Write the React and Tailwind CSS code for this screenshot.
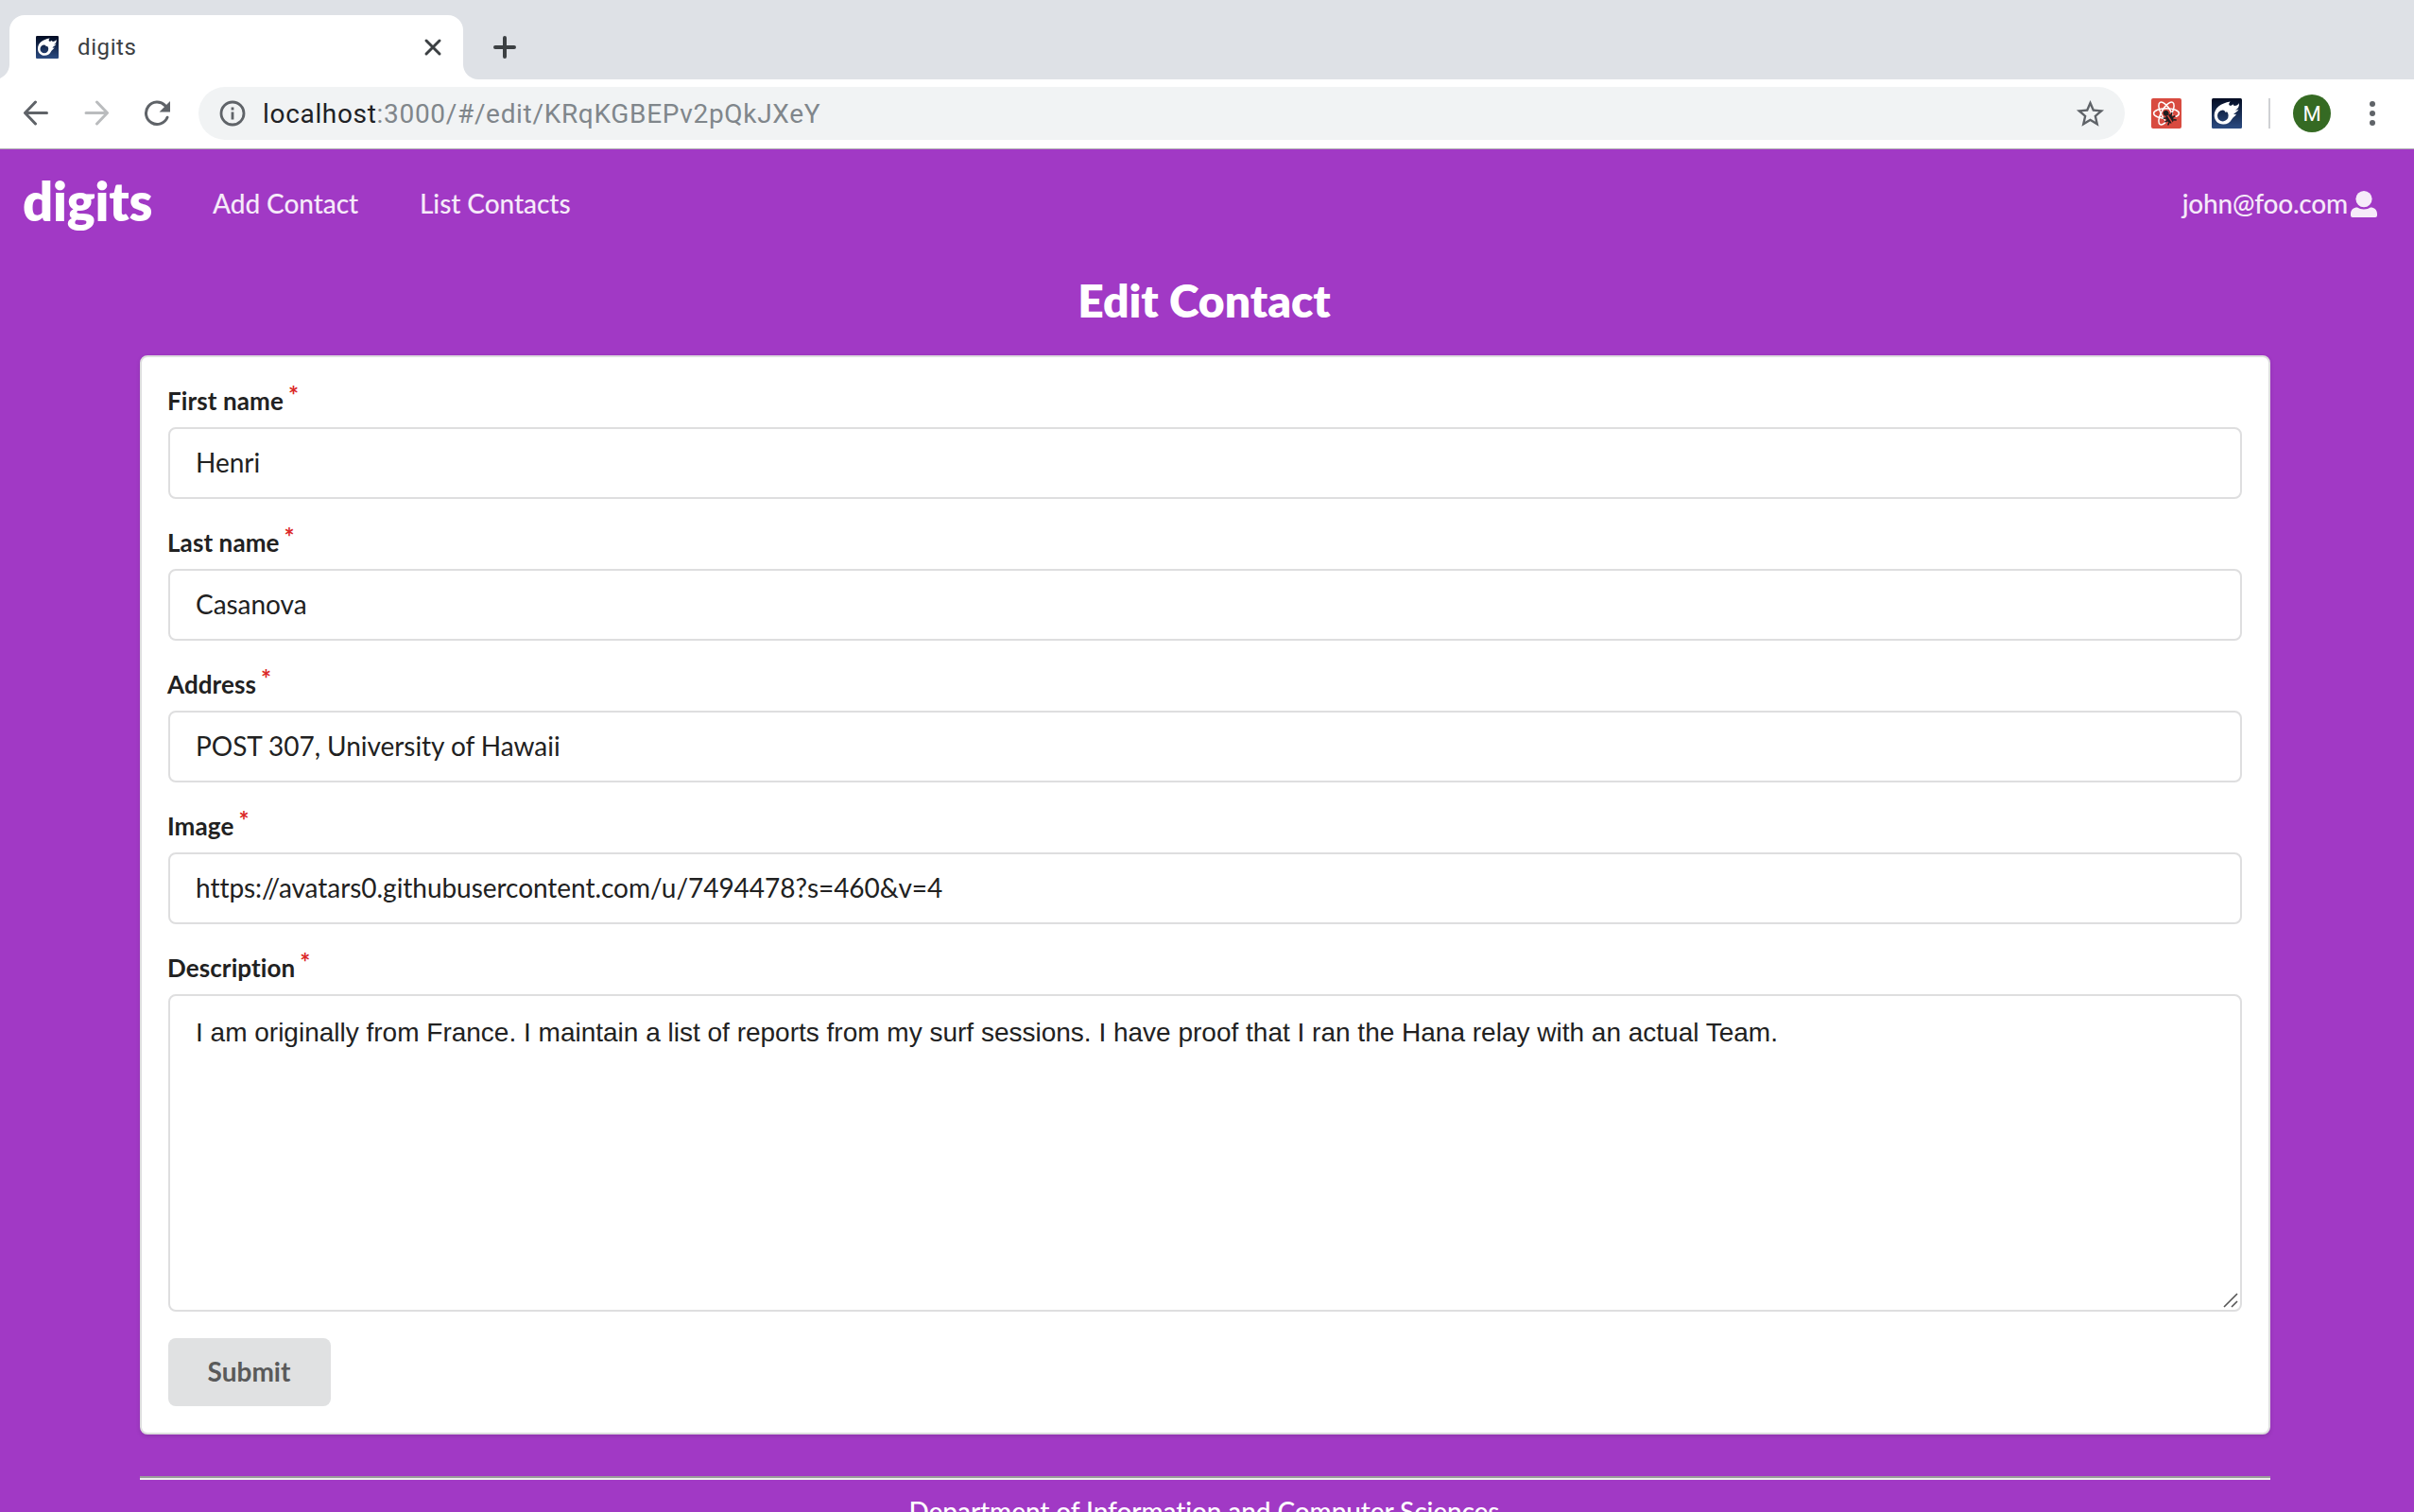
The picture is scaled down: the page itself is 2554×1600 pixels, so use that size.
import React from "react";

function FlameIcon({ className, id }) {
  return (
    <svg className={className} viewBox="0 0 32 32">
      <defs>
        <linearGradient id={id} x1="0" y1="0" x2="0" y2="1">
          <stop offset="0" stopColor="#020b22" />
          <stop offset="1" stopColor="#2c4c82" />
        </linearGradient>
      </defs>
      <rect width="32" height="32" rx="1.5" fill={`url(#${id})`} />
      <path
        fill="#fff"
        fillRule="evenodd"
        d="M2.7 18.5C2.6 10 9.5 5.2 19.6 3.4C18.2 5 17.8 6.2 18.6 7.2C19.8 8.2 21.4 7.6 22.6 6.2C22.6 7.6 24 8.2 25.4 7.8C27 7.4 28.4 6.4 28.8 5C29.4 8.4 28 11.2 25 12.4C26.6 12.6 27.6 12.2 28.6 11.4C27.6 14 24.6 15 23.2 16.8C24.2 17.2 25.2 17 26.2 16.4C25 19 22.4 20 21.2 22.2C19.4 25.6 16 27.8 12 27.6C6.6 27.4 2.9 23.6 2.7 18.5ZM11.8 12.6A5.8 5.9 0 1 0 17.6 18.4C17.6 16.8 17 15.2 16 14.2L14.6 15C14.2 13.8 13 12.6 11.8 12.6Z"
      />
    </svg>
  );
}

function ReactBugIcon() {
  return (
    <svg className="size-8 shrink-0" viewBox="0 0 32 32">
      <rect width="32" height="32" rx="2" fill="#d84b40" />
      <g fill="none" stroke="#fff" strokeWidth="1.5">
        <ellipse cx="16" cy="16" rx="13.4" ry="5.2" />
        <ellipse cx="16" cy="16" rx="13.4" ry="5.2" transform="rotate(60 16 16)" />
        <ellipse cx="16" cy="16" rx="13.4" ry="5.2" transform="rotate(120 16 16)" />
      </g>
      <path d="M14 20L19 15L27 20.5L24 30L17 29.5Z" fill="#d84b40" />
      <g transform="rotate(-32 16 16)" fill="#1d1d1f">
        <circle cx="15.8" cy="15.6" r="2.9" />
        <path d="M12.6 19.6Q13.6 18 15.4 18.6V27.6Q12.8 27 12.6 24Z" />
        <path d="M19.6 19.6Q18.6 18 16.8 18.6V27.6Q19.4 27 19.6 24Z" />
        <path d="M10.6 18.4L13 20.2M9.8 23H13M10.8 27.6L13.4 25.6M21.6 18.4L19.2 20.2M22.4 23H19.2M21.4 27.6L18.8 25.6" stroke="#1d1d1f" strokeWidth="1.5" />
      </g>
    </svg>
  );
}

function TabStrip() {
  return (
    <div className="flex h-[84px] items-end bg-[#dee1e6]">
      <div className="h-4 w-[10px] overflow-hidden bg-white">
        <div className="-ml-1.5 size-4 rounded-br-[16px] bg-[#dee1e6]" />
      </div>
      <div className="flex h-[68px] w-[480px] items-center rounded-t-2xl bg-white pl-7 pr-[22px]">
        <FlameIcon className="size-6" id="tab-sky" />
        <span className="ml-5 grow font-[Roboto] text-[24px] tracking-[0.6px] text-[#3c4043]">digits</span>
        <svg className="size-5" viewBox="0 0 20 20" fill="none" stroke="#3c4043" strokeWidth="3" strokeLinecap="round">
          <path d="M3 3L17 17M17 3L3 17" />
        </svg>
      </div>
      <div className="size-4 bg-white">
        <div className="size-4 rounded-bl-[16px] bg-[#dee1e6]" />
      </div>
      <svg className="mb-[22px] ml-4 size-6" viewBox="0 0 24 24" stroke="#3c4043" strokeWidth="4" strokeLinecap="round">
        <path d="M12 2V22M2 12H22" />
      </svg>
    </div>
  );
}

function Toolbar() {
  return (
    <div className="flex h-[74px] items-start border-b border-[#b0aeb4] bg-white pt-2">
      <div className="flex h-14 w-[210px] items-center pl-6">
        <svg className="size-7" viewBox="0 0 28 28" fill="none" stroke="#5f6368" strokeWidth="3" strokeLinecap="round" strokeLinejoin="round">
          <path d="M25.5 13.5H3M13.5 2L2.5 13.5L13.5 25" />
        </svg>
        <svg className="ml-9 size-7" viewBox="0 0 28 28" fill="none" stroke="#babcbe" strokeWidth="3" strokeLinecap="round" strokeLinejoin="round">
          <path d="M3 13.5H25M14.5 2L25.5 13.5L14.5 25" />
        </svg>
        <svg className="ml-9 size-7" viewBox="0 0 28 28">
          <path d="M25 18.2A11.7 11.7 0 1 1 22.6 5.6" fill="none" stroke="#5f6368" strokeWidth="3" strokeLinecap="round" />
          <path d="M28 1V12.4H16.6Z" fill="#5f6368" />
        </svg>
      </div>
      <div className="flex h-14 w-[2038px] items-center rounded-full bg-[#f1f3f4] pl-[22px] pr-[19px]">
        <svg className="size-7" viewBox="0 0 28 28">
          <circle cx="14" cy="14" r="12" fill="none" stroke="#5f6368" strokeWidth="2.8" />
          <path d="M14 12.6V20.4M14 7.4V10.4" stroke="#5f6368" strokeWidth="2.8" />
        </svg>
        <div className="ml-[18px] grow pt-0.5 font-[Roboto] text-[28px] tracking-[0.68px] text-[#80868b]">
          <span className="text-[#202124]">localhost</span>:3000/#/edit/KRqKGBEPv2pQkJXeY
        </div>
        <svg className="size-[35px]" viewBox="0 0 24 24" fill="#5f6368">
          <path d="M22 9.24l-7.19-.62L12 2 9.19 8.63 2 9.24l5.46 4.73L5.82 21 12 17.27 18.18 21l-1.63-7.03L22 9.24zM12 15.4l-3.76 2.27 1-4.28-3.32-2.88 4.38-.38L12 6.1l1.71 4.04 4.38.38-3.32 2.88 1 4.28L12 15.4z" />
        </svg>
      </div>
      <div className="flex h-14 grow items-center pl-7">
        <ReactBugIcon />
        <FlameIcon className="ml-8 size-8" id="ext-sky" />
        <div className="ml-7 h-8 w-0.5 bg-[#cfd1d4]" />
        <div className="ml-6 flex size-10 items-center justify-center rounded-full bg-[#356a23] font-[Roboto] text-[22px] text-white">M</div>
        <div className="ml-[41px] flex flex-col gap-1">
          <div className="size-1.5 rounded-full bg-[#5f6368]" />
          <div className="size-1.5 rounded-full bg-[#5f6368]" />
          <div className="size-1.5 rounded-full bg-[#5f6368]" />
        </div>
      </div>
    </div>
  );
}

function NavBar() {
  return (
    <nav className="flex h-[116px] items-center pl-6 pr-[39px] text-[28px] font-medium tracking-[-0.05px] text-white/90">
      <h1 className="w-[201px] pb-[7px] text-[56px] leading-[72px] font-extrabold tracking-[-0.2px] text-white">digits</h1>
      <a className="w-[219px] pb-0.5">Add Contact</a>
      <a className="grow pb-0.5">List Contacts</a>
      <span className="pb-0.5 tracking-[-0.2px]">john@foo.com</span>
      <svg className="ml-[3px] size-7" viewBox="0 0 28 28" fill="currentColor">
        <circle cx="14" cy="8.6" r="8.6" />
        <path d="M0 24.4C0 20 3 17.6 7 17.6C9 18.8 11 19.6 14 19.6C17 19.6 19 18.8 21 17.6C25 17.6 28 20 28 24.4V26Q28 28 26 28H2Q0 28 0 26Z" />
      </svg>
    </nav>
  );
}

const fields = [
  ["First name", "Henri"],
  ["Last name", "Casanova"],
  ["Address", "POST 307, University of Hawaii"],
  ["Image", "https://avatars0.githubusercontent.com/u/7494478?s=460&v=4"],
];

function Label({ children }) {
  return (
    <div className="-ml-px mb-[10px] flex h-9 items-center text-[26px] leading-9 font-bold tracking-[0.1px]">
      {children}
      <span className="mb-3 ml-[5px] font-bold text-[#db2828]">*</span>
    </div>
  );
}

function ContactForm() {
  return (
    <form className="mx-[148px] h-[1142px] w-[2254px] rounded-lg border-2 border-[#dededf] bg-white px-7 pt-7 text-[28px] text-[#212121] shadow-[0_2px_4px_0_rgba(34,36,38,0.15)]">
      {fields.map(([label, value]) => (
        <div key={label} className="mb-7 h-[122px]">
          <Label>{label}</Label>
          <div className="flex h-[76px] items-center rounded-lg border-2 border-[#dededf] px-[27px] pb-0.5 tracking-[-0.04px]">{value}</div>
        </div>
      ))}
      <Label>Description</Label>
      <div className="relative h-[336px] rounded-lg border-2 border-[#dededf] px-[27px] pt-[21px] font-['Liberation_Sans'] leading-9">
        I am originally from France. I maintain a list of reports from my surf sessions. I have proof that I ran the Hana relay with an actual Team.
        <svg className="absolute right-0.5 bottom-0.5 size-4" viewBox="0 0 16 16" stroke="#555" strokeWidth="1.6">
          <path d="M1 15L15 1M9 15L15 9" />
        </svg>
      </div>
      <button type="button" className="mt-7 h-[72px] w-[172px] rounded-lg bg-[#e0e1e2] pr-px pb-0.5 font-bold text-[#5a5a5a]">Submit</button>
    </form>
  );
}

export default function App() {
  return (
    <div className="h-[1600px] w-[2554px] overflow-hidden bg-[#a139c5] font-[Lato] [font-variant-ligatures:none]">
      <TabStrip />
      <Toolbar />
      <NavBar />
      <h2 className="mt-3 flex h-[90px] w-[2548px] justify-center pt-px text-[48px] leading-[62px] font-extrabold text-white">Edit Contact</h2>
      <ContactForm />
      <footer className="mx-[148px] mt-11 w-[2254px]">
        <div className="h-0.5 bg-[#9a9a9a]" />
        <div className="h-0.5 bg-[#eeeeee]" />
        <p className="mt-[15px] pr-0.5 text-center text-[28px] leading-[36px] font-medium tracking-[-0.09px] text-white">Department of Information and Computer Sciences</p>
      </footer>
    </div>
  );
}
